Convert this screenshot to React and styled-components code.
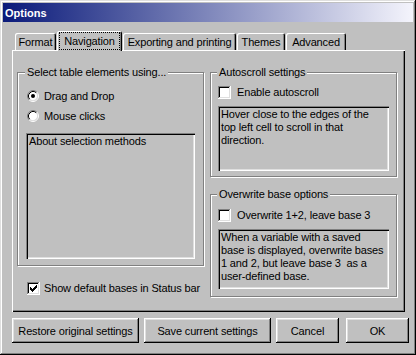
import React from "react";
import styled, { createGlobalStyle } from "styled-components";

const GlobalStyle = createGlobalStyle`
  body {
    margin: 0;
    background: #c0c0c0;
    font-family: "Liberation Sans", Arial, sans-serif;
    font-size: 11px;
    letter-spacing: -0.15px;
    color: #000;
  }
`

const Window = styled.div`
  box-sizing: border-box;
  width: 416px;
  height: 355px;
  padding: 3px;
  background: #c0c0c0;
  box-shadow: inset -1px -1px #000, inset 1px 1px #dfdfdf, inset -2px -2px #808080, inset 2px 2px #fff;
  display: flex;
  flex-direction: column;
`

const TitleBar = styled.div`
  height: 19px;
  padding-left: 2px;
  display: flex;
  align-items: center;
  background: linear-gradient(90deg, #0a1a7a 0%, #f4f4fc 100%);
  color: #fff;
  font-weight: bold;
  font-size: 11px;
  letter-spacing: 0;
`

const Body = styled.div`
  padding: 9px 0 0 9px;
  display: flex;
  flex-direction: column;
`

const TabStrip = styled.div`
  display: flex;
  align-items: flex-end;
  gap: 1px;
  height: 19px;
  padding-left: 3px;
`

const Tab = styled.div`
  position: relative;
  z-index: ${p => (p.$active ? 1 : 0)};
  box-sizing: border-box;
  width: ${p => p.$w}px;
  height: ${p => (p.$active ? 20 : 17)}px;
  margin-bottom: ${p => (p.$active ? -1 : 0)}px;
  padding-bottom: ${p => (p.$active ? 1 : 0)}px;
  background: #c0c0c0;
  border-top-left-radius: 2px;
  border-top-right-radius: 2px;
  box-shadow: inset 1px 1px #fff, inset -1px 0 #000, inset -2px 0 #808080;
  display: flex;
  align-items: center;
  justify-content: center;
  white-space: nowrap;
`

const FocusBox = styled.span`
  flex: 1;
  align-self: stretch;
  margin: 1px 2px 0 2px;
  border: 1px dotted #000;
  display: flex;
  align-items: center;
  justify-content: center;
`

const Panel = styled.div`
  box-sizing: border-box;
  width: 393px;
  height: 262px;
  padding: 16px 0 0 5px;
  box-shadow: inset 1px 1px #fff, inset -1px -1px #000, inset -2px -2px #808080;
  display: grid;
  grid-template-columns: 187px 187px;
  column-gap: 6px;
  align-items: start;
`

const Column = styled.div`
  display: flex;
  flex-direction: column;
  gap: ${p => p.$gap || 0}px;
`

const Group = styled.fieldset`
  box-sizing: border-box;
  margin: 0;
  min-width: 0;
  height: ${p => p.$h}px;
  padding: 0 ${p => p.$px}px;
  border: 1px solid #808080;
  box-shadow: inset 1px 1px #fff, 1px 1px #fff;
  display: flex;
  flex-direction: column;
`

const Legend = styled.legend`
  margin-left: -1px;
  padding: 0 2px;
  line-height: 13px;
  background: #c0c0c0;
`

const OptionRow = styled.label`
  display: flex;
  align-items: center;
  gap: ${p => p.$gap || 5}px;
  height: 20px;
  margin-top: ${p => p.$mt || 0}px;
  padding-left: ${p => p.$indent || 0}px;
  white-space: nowrap;
`

const InfoBox = styled.div`
  box-sizing: border-box;
  height: ${p => p.$h}px;
  margin-top: ${p => p.$mt}px;
  padding: 2px 2px 0 3px;
  line-height: 13px;
  white-space: nowrap;
  overflow: hidden;
  box-shadow: inset 1px 1px #808080, inset 2px 2px #000, inset -1px -1px #fff, inset -2px -2px #dfdfdf;
`

const ButtonRow = styled.div`
  display: flex;
  margin-top: 6px;
  gap: 5px;
`

const Button = styled.button`
  box-sizing: border-box;
  width: ${p => p.$w}px;
  height: 25px;
  margin-left: ${p => p.$ml || 0}px;
  padding: 0;
  border: none;
  background: #c0c0c0;
  font-family: "Liberation Sans", Arial, sans-serif;
  font-size: 11px;
  letter-spacing: -0.15px;
  color: #000;
  box-shadow: inset -1px -1px #000, inset 1px 1px #fff, inset -2px -2px #808080, inset 2px 2px #dfdfdf;
`

const Radio = ({ checked }) => (
  <svg width="12" height="12" viewBox="0 0 12 12">
    <circle cx="6" cy="6" r="4.5" fill="#fff" />
    <path d="M2.11 9.89 A5.5 5.5 0 0 1 9.89 2.11" fill="none" stroke="#808080" />
    <path d="M9.89 2.11 A5.5 5.5 0 0 1 2.11 9.89" fill="none" stroke="#fff" />
    <path d="M2.82 9.18 A4.5 4.5 0 0 1 9.18 2.82" fill="none" stroke="#000" />
    <path d="M9.18 2.82 A4.5 4.5 0 0 1 2.82 9.18" fill="none" stroke="#dfdfdf" />
    {checked && <circle cx="6" cy="6" r="2" fill="#000" />}
  </svg>
)

const Checkbox = ({ checked }) => (
  <svg width="13" height="13" viewBox="0 0 13 13" shapeRendering="crispEdges">
    <rect x="0" y="0" width="13" height="13" fill="#fff" />
    <path d="M0 0h12v1H1v11H0z" fill="#808080" />
    <path d="M1 1h10v1H2v9H1z" fill="#000" />
    <path d="M11 1h1v11H1v-1h10z" fill="#dfdfdf" />
    {checked && (
      <path
        d="M9 3h1v1H9z M8 4h2v1H8z M3 5h1v1H3z M7 5h3v1H7z M3 6h2v1H3z M6 6h3v1H6z M3 7h5v1H3z M4 8h3v1H4z M5 9h1v1H5z"
        fill="#000"
      />
    )}
  </svg>
)

const tabs = [
  { label: "Format", w: 41 },
  { label: "Navigation", w: 65, active: true },
  { label: "Exporting and printing", w: 113 },
  { label: "Themes", w: 48 },
  { label: "Advanced", w: 60 },
]

const App = () => (
  <>
    <GlobalStyle />
    <Window>
      <TitleBar>Options</TitleBar>
      <Body>
        <TabStrip>
          {tabs.map(t => (
            <Tab key={t.label} $w={t.w} $active={t.active}>
              {t.active ? <FocusBox>{t.label}</FocusBox> : t.label}
            </Tab>
          ))}
        </TabStrip>
        <Panel>
          <Column>
            <Group $h={200} $px={8}>
              <Legend>Select table elements using...</Legend>
              <OptionRow $mt={7} $indent={1}><Radio checked />Drag and Drop</OptionRow>
              <OptionRow $indent={1}><Radio />Mouse clicks</OptionRow>
              <InfoBox $h={126} $mt={7}>About selection methods</InfoBox>
            </Group>
            <OptionRow $mt={12} $indent={10} $gap={4}><Checkbox checked />Show default bases in Status bar</OptionRow>
          </Column>
          <Column $gap={11}>
            <Group $h={111} $px={7}>
              <Legend>Autoscroll settings</Legend>
              <OptionRow $mt={3} $gap={6}><Checkbox />Enable autoscroll</OptionRow>
              <InfoBox $h={65} $mt={4}>
                Hover close to the edges of the<br />
                top left cell to scroll in that<br />
                direction.
              </InfoBox>
            </Group>
            <Group $h={109} $px={7}>
              <Legend>Overwrite base options</Legend>
              <OptionRow $mt={4} $gap={6}><Checkbox />Overwrite 1+2, leave base 3</OptionRow>
              <InfoBox $h={60} $mt={4}>
                When a variable with a saved<br />
                base is displayed, overwrite bases<br />
                1 and 2, but leave base 3&nbsp; as a<br />
                user-defined base.
              </InfoBox>
            </Group>
          </Column>
        </Panel>
        <ButtonRow>
          <Button $w={127}>Restore original settings</Button>
          <Button $w={127}>Save current settings</Button>
          <Button $w={63}>Cancel</Button>
          <Button $w={63} $ml={2}>OK</Button>
        </ButtonRow>
      </Body>
    </Window>
  </>
)

export default App;
